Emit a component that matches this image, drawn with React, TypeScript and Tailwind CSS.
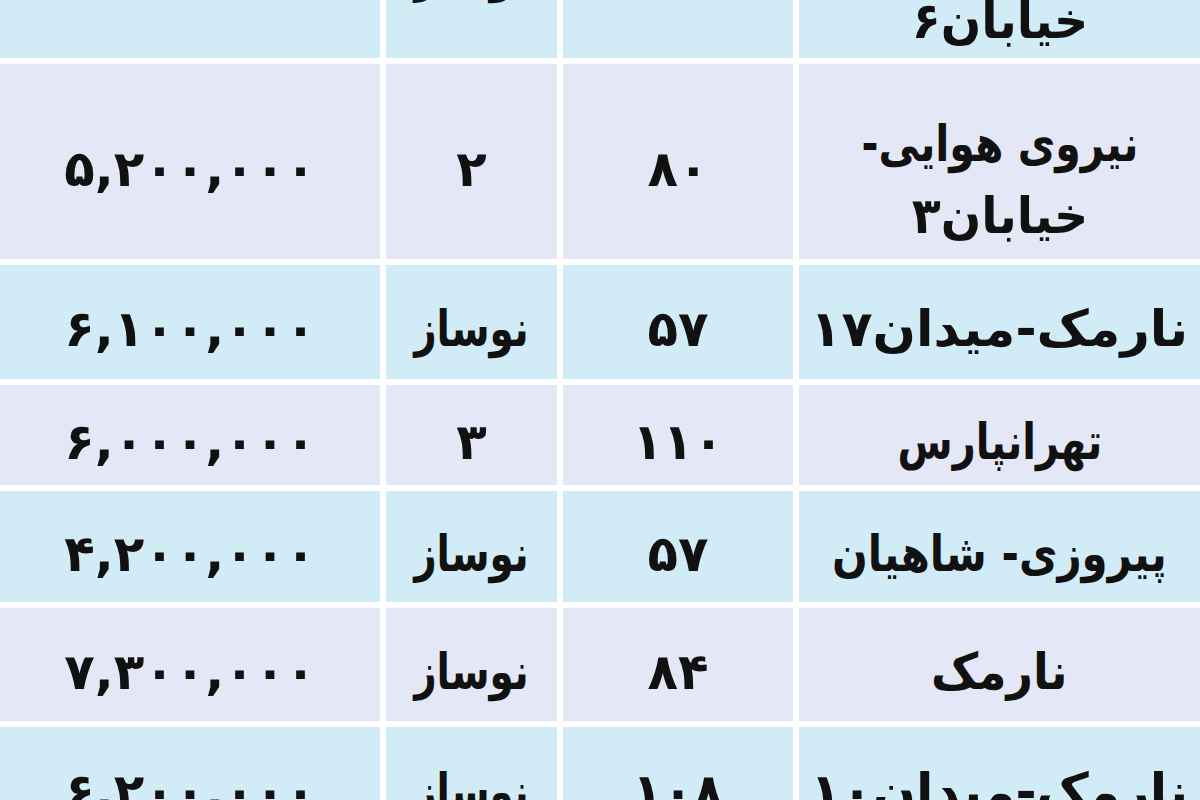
import React from 'react';

// Price table rows (right-to-left: location, area, condition, price)
interface Line {
  text: string;
  scale: string;
}

interface Row {
  location: Line[];
  area: string;
  condition: string;
  price: string;
  height: string;
}

const rows: Row[] = [
  {
    location: [{ text: 'نیروی هوایی-', scale: 'scale-x-[0.82]' }, { text: 'خیابان۶', scale: 'scale-x-95' }],
    area: '۷۵', condition: 'نوساز', price: '۵,۸۰۰,۰۰۰', height: 'h-[183px]',
  },
  {
    location: [{ text: 'نیروی هوایی-', scale: 'scale-x-[0.82]' }, { text: 'خیابان۳', scale: 'scale-x-95' }],
    area: '۸۰', condition: '۲', price: '۵,۲۰۰,۰۰۰', height: 'h-[195px]',
  },
  { location: [{ text: 'نارمک-میدان۱۷', scale: 'scale-x-[1.02]' }], area: '۵۷', condition: 'نوساز', price: '۶,۱۰۰,۰۰۰', height: 'h-[114px]' },
  { location: [{ text: 'تهرانپارس', scale: 'scale-x-[0.8]' }], area: '۱۱۰', condition: '۳', price: '۶,۰۰۰,۰۰۰', height: 'h-[100px]' },
  { location: [{ text: 'پیروزی- شاهیان', scale: 'scale-x-[0.84]' }], area: '۵۷', condition: 'نوساز', price: '۴,۲۰۰,۰۰۰', height: 'h-[111px]' },
  { location: [{ text: 'نارمک', scale: 'scale-x-[0.92]' }], area: '۸۴', condition: 'نوساز', price: '۷,۳۰۰,۰۰۰', height: 'h-[113px]' },
  { location: [{ text: 'نارمک-میدان۱۰', scale: 'scale-x-[1.02]' }], area: '۱۰۸', condition: 'نوساز', price: '۶,۲۰۰,۰۰۰', height: 'h-[115px]' },
];

export default function App() {
  return (
    <div className="w-[1200px] h-[800px] overflow-hidden bg-white">
      <div
        dir="rtl"
        className="-mt-[125px] grid grid-cols-[401px_230px_171px_380px] gap-[6px] text-[50px] font-bold leading-[72px] text-[#111]"
        style={{ fontFamily: '"DejaVu Sans", sans-serif' }}
      >
        {rows.map((row, i) => {
          const bg = i % 2 === 0 ? 'bg-[#d2ecf7]' : 'bg-[#e4e7f5]';
          const cell = `${bg} ${row.height} flex flex-col items-center justify-center text-center`;
          const multi = row.location.length > 1;
          const word = row.condition.length > 1;
          return (
            <React.Fragment key={i}>
              <div className={`${cell} ${multi ? 'pt-[36px]' : 'pt-[14px]'}`}>
                {row.location.map((line) => (
                  <span key={line.text} className={`inline-block whitespace-nowrap ${line.scale}`}>{line.text}</span>
                ))}
              </div>
              <div className={`${cell} pt-[14px]`}>{row.area}</div>
              <div className={`${cell} pt-[14px]`}>
                <span className={`inline-block ${word ? 'scale-x-[0.78]' : ''}`}>{row.condition}</span>
              </div>
              <div className={`${cell} pt-[14px]`}>
                <span dir="ltr" className="tracking-[1px]">{row.price}</span>
              </div>
            </React.Fragment>
          );
        })}
      </div>
    </div>
  );
}
